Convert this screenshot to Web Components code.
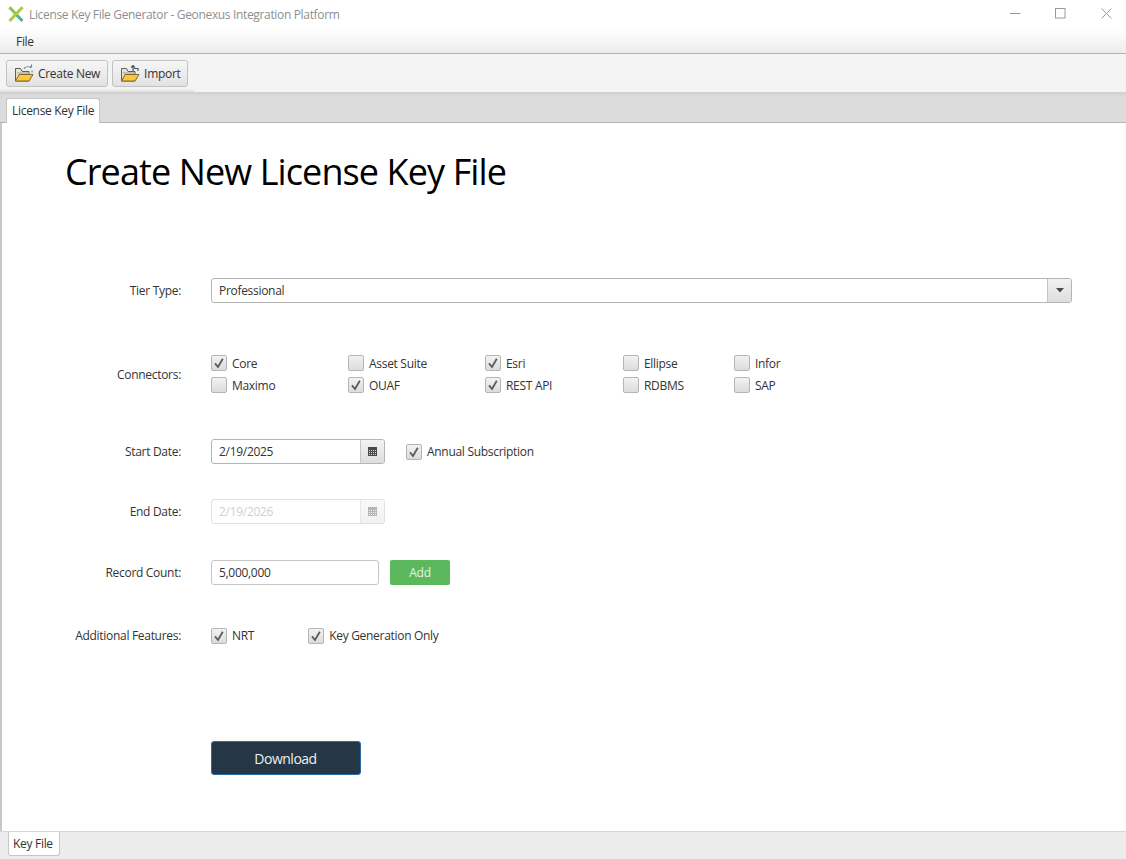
<!DOCTYPE html>
<html><head><meta charset="utf-8">
<style>
html,body{margin:0;padding:0;height:859px;overflow:hidden;background:#fff;font:12px "Open Sans","Noto Sans",sans-serif;color:#333}
</style></head><body>
<app-window></app-window>
<script>
const FONT='"Open Sans","Noto Sans",sans-serif';
function def(name,css,html,init){
  customElements.define(name,class extends HTMLElement{
    constructor(){super();const s=this.attachShadow({mode:'open'});
      s.innerHTML='<style>'+css+'</style>'+(typeof html==='function'?html(this):html);}
    connectedCallback(){ if(init) init(this); }
  });
}
const folder=(arrow)=>`<svg width="20" height="20" viewBox="0 0 20 20" style="display:block">
<path d="M1.5 5.5V18H15V8.5H8L6.5 5.5Z" fill="#e6e4d8" stroke="#5f5f55" stroke-width="1"/>
<path d="M3 10h11.5" stroke="#9a9a88" stroke-width="1"/>
<path d="M1.5 18L5 11.5H19L15 18Z" fill="#fdc93c" stroke="#7a6a30" stroke-width="1" stroke-linejoin="round"/>
${arrow==='up'?'<path d="M13 8V2.5M11 4.5L13 2.5L15 4.5M14 5.5H18V8" fill="none" stroke="#4a5a6a" stroke-width="1.2"/>':'<path d="M10 5.5C12 3.5 15 3 17.5 4M17.5 1.5V4.5H15M18 7.5V10" fill="none" stroke="#6a7a8a" stroke-width="1.1" stroke-dasharray="2 1"/>'}
</svg>`;
const cal=`<svg width="9" height="9" viewBox="0 0 9 9" style="display:block" shape-rendering="crispEdges"><rect width="9" height="9" fill="#484848"/><path d="M1 3h1v1H1zM3 3h1v1H3zM5 3h1v1H5zM7 3h1v1H7zM1 5h1v1H1zM3 5h1v1H3zM5 5h1v1H5zM7 5h1v1H7zM1 7h1v1H1zM3 7h1v1H3zM5 7h1v1H5zM7 7h1v1H7z" fill="#d8d8d8"/></svg>`;

def('title-bar',`:host{display:flex;align-items:center;height:29px;background:#fff;color:#8f8f8f;font-size:12px;flex:none;letter-spacing:-.34px}
 .logo{margin-left:8px;margin-right:5px;display:block;margin-bottom:2px}
 .t{flex:1;white-space:nowrap}
 .c{display:flex;align-items:center;justify-content:center;width:45px;height:26px;align-self:flex-start}`,
`<svg class="logo" width="16" height="16" viewBox="0 0 16 16"><path d="M1.5 1.2L8 8.2" stroke="#8cc152" stroke-width="3" fill="none"/><path d="M8 8.2L14.5 15" stroke="#54b48c" stroke-width="3" fill="none"/><path d="M14.5 1.2L1.5 15" stroke="#a8cc3c" stroke-width="3" fill="none"/></svg>
<span class="t">License Key File Generator - Geonexus Integration Platform</span>
<span class="c"><svg width="11" height="11"><path d="M0 5.5H10.5" stroke="#9a9a9a"/></svg></span>
<span class="c"><svg width="11" height="11"><rect x=".5" y=".5" width="9.5" height="9.5" fill="none" stroke="#9a9a9a"/></svg></span>
<span class="c" style="margin-left:1px;margin-right:-3px"><svg width="11" height="11"><path d="M.5 .5L10.5 10.5M10.5 .5L.5 10.5" stroke="#9a9a9a"/></svg></span>`);

def('menu-bar',`:host{display:flex;align-items:center;height:25px;flex:none;box-sizing:border-box;background:linear-gradient(#fff,#ececec);border-bottom:1px solid #b0b0b0;padding-left:16px;color:#333;font-size:12px}`,
`<slot></slot>`);

def('tool-button',`:host{display:inline-flex;align-items:center;gap:4px;height:25px;padding:0 7px;border:1px solid #c2c2c2;border-radius:3px;background:linear-gradient(#f6f6f6,#e2e2e2);color:#333;font-size:12px;box-sizing:content-box;white-space:nowrap}`,
 el=>folder(el.getAttribute('arrow'))+'<slot></slot>');

def('tool-bar',`:host{display:flex;gap:4px;align-items:center;height:38px;padding:0 0 0 6px;background:linear-gradient(rgba(220,220,220,0),#dcdcdc) 0 100%/194px 3px no-repeat,#f4f4f4;flex:none;box-sizing:border-box}`,`<slot></slot>`);

def('tab-strip',`:host{display:flex;align-items:flex-end;height:31px;flex:none;box-sizing:border-box;padding-left:6px;background:linear-gradient(#cfcfcf,#dcdcdc 4px);border-bottom:1px solid #b4b4b4}
 .tab{background:#fff;border:1px solid #c6c6c6;border-bottom:none;border-radius:3px 3px 0 0;height:24px;line-height:24px;padding:0 5px;margin-bottom:-1px;font-size:12px;color:#333}`,
`<div class="tab"><slot></slot></div>`);

def('status-tabs',`:host{display:flex;align-items:flex-start;height:28px;flex:none;box-sizing:border-box;padding-left:8px;background:#ececec;border-top:1px solid #d6d6d6}
 .tab{background:#fff;border:1px solid #c6c6c6;border-top:none;border-radius:0 0 3px 3px;height:23px;line-height:23px;padding:0 6px 0 4px;font-size:12px;color:#333}`,
`<div class="tab"><slot></slot></div>`);

def('x-check',`:host{display:inline-flex;align-items:center;gap:5px;font-size:12px;color:#333;white-space:nowrap;height:16px}
 .b{width:14px;height:14px;border:1px solid #b5b5b5;border-radius:2px;background:linear-gradient(#f2f2f2,#dcdcdc);display:block;flex:none}
 svg{display:block}`,
 el=>`<span class="b">${el.hasAttribute('checked')?'<svg width="14" height="14" viewBox="0 0 14 14"><path d="M3 7.4L6 11L10.8 2.8" fill="none" stroke="#5a5a5a" stroke-width="1.8"/></svg>':''}</span><slot></slot>`);

def('form-row',`:host{display:flex;align-items:center;flex:none}
 .l{width:181px;margin-right:30px;text-align:right;color:#333;font-size:12px;white-space:nowrap;flex:none;box-sizing:border-box}
 .c{flex:1;display:flex;align-items:center;min-width:0}`,
 el=>`<div class="l">${el.getAttribute('label')}</div><div class="c"><slot></slot></div>`);

def('combo-box',`:host{display:flex;flex:1;height:25px;box-sizing:border-box;border:1px solid #b5b5b5;border-radius:3px;background:#fff;font-size:12px;color:#333;overflow:hidden}
 .v{flex:1;padding-left:7px;line-height:23px}
 .a{width:23px;border-left:1px solid #c4c4c4;background:linear-gradient(#f2f2f2,#dedede);display:flex;align-items:center;justify-content:center}`,
`<div class="v"><slot></slot></div><div class="a"><svg width="8" height="5"><path d="M0 0H8L4 4.5Z" fill="#4a4a4a"/></svg></div>`);

def('date-picker',`:host{display:flex;width:174px;height:25px;box-sizing:border-box;border:1px solid #b5b5b5;border-radius:3px;background:#fff;font-size:12px;color:#333;overflow:hidden;flex:none}
 :host([disabled]){opacity:.4;color:#888}
 .v{flex:1;padding-left:7px;line-height:23px}
 .a{width:23px;border-left:1px solid #c4c4c4;background:linear-gradient(#f2f2f2,#dedede);display:flex;align-items:center;justify-content:center}`,
`<div class="v"><slot></slot></div><div class="a">${cal}</div>`);

def('text-field',`:host{display:block;width:168px;height:25px;box-sizing:border-box;border:1px solid #c6c6c6;border-radius:3px;padding-left:7px;line-height:23px;font-size:12px;color:#333;background:#fff;flex:none}`,`<slot></slot>`);

def('add-button',`:host{display:flex;align-items:center;justify-content:center;width:60px;height:25px;background:#5cb85c;border-radius:2px;color:#e6f3e6;font-size:12px;flex:none}`,`<slot></slot>`);
def('dl-button',`:host{display:flex;align-items:center;justify-content:center;width:150px;height:34px;box-sizing:border-box;background:#253746;border:1px solid #2d6ca2;border-radius:3px;color:#f0f0f0;font-size:14px;letter-spacing:-.5px;flex:none;padding-right:1px}`,`<slot></slot>`);

def('check-grid',`:host{display:grid;grid-template-columns:137px 137px 138px 111px auto;row-gap:6px;flex:none}`,`<slot></slot>`);

def('license-form',`:host{display:flex;flex-direction:column;flex:1;background:#fff;border-left:2px solid #c8c8c8;min-height:0}
 h1{font-weight:400;font-size:36px;line-height:48px;letter-spacing:-.9px;margin:25px 0 0 63px;color:#000;white-space:nowrap}
 .rows{display:flex;flex-direction:column;padding-right:54px;margin-left:-2px}
 .r1{margin-top:82px}.r2{margin-top:52px}.r3{margin-top:46px}.r4{margin-top:35px}.r5{margin-top:36px}.r6{margin-top:42px}.r7{margin-top:97px}`,
`<h1>Create New License Key File</h1>
<div class="rows">
<form-row class="r1" label="Tier Type:"><combo-box>Professional</combo-box></form-row>
<form-row class="r2" label="Connectors:"><check-grid>
 <x-check checked>Core</x-check><x-check>Asset Suite</x-check><x-check checked>Esri</x-check><x-check>Ellipse</x-check><x-check>Infor</x-check>
 <x-check>Maximo</x-check><x-check checked>OUAF</x-check><x-check checked>REST API</x-check><x-check>RDBMS</x-check><x-check>SAP</x-check>
</check-grid></form-row>
<form-row class="r3" label="Start Date:"><date-picker>2/19/2025</date-picker><x-check checked style="margin-left:21px">Annual Subscription</x-check></form-row>
<form-row class="r4" label="End Date:"><date-picker disabled>2/19/2026</date-picker></form-row>
<form-row class="r5" label="Record Count:"><text-field>5,000,000</text-field><add-button style="margin-left:11px">Add</add-button></form-row>
<form-row class="r6" label="Additional Features:"><x-check checked>NRT</x-check><x-check checked style="margin-left:54px">Key Generation Only</x-check></form-row>
<form-row class="r7" label=""><dl-button>Download</dl-button></form-row>
</div>`);

def('app-window',`:host{display:flex;flex-direction:column;width:1126px;height:859px;overflow:hidden;background:#fff;font-family:${FONT};letter-spacing:-.3px}`,
`<title-bar></title-bar>
<menu-bar>File</menu-bar>
<tool-bar><tool-button arrow="new">Create New</tool-button><tool-button arrow="up">Import</tool-button></tool-bar>
<tab-strip>License Key File</tab-strip>
<license-form></license-form>
<status-tabs>Key File</status-tabs>`);
</script>
</body></html>
